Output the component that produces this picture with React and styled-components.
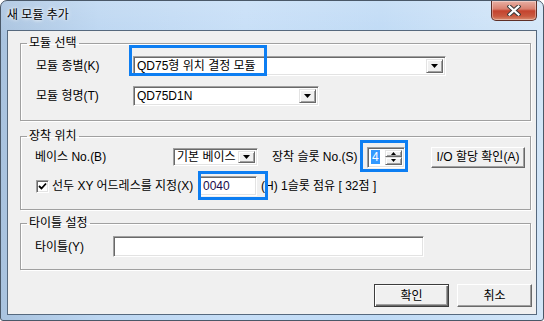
import React from "react";
import styled, { createGlobalStyle, css } from "styled-components";

const FONT = `"Liberation Sans", "Noto Sans CJK KR", sans-serif`;

const GlobalStyle = createGlobalStyle`
  html, body {
    margin: 0;
    padding: 0;
    background: #fff;
  }
  body {
    font-family: ${FONT};
    font-size: 12px;
  }
`;

const sunken = css`
  box-sizing: border-box;
  border: 1px solid;
  border-color: #a0a0a0 #fff #fff #a0a0a0;
  box-shadow: inset 1px 1px 0 #696969, inset -1px -1px 0 #e3e3e3;
  background: #fff;
`;

const raised = css`
  box-sizing: border-box;
  border: 1px solid;
  border-color: #e3e3e3 #696969 #696969 #e3e3e3;
  box-shadow: inset 1px 1px 0 #fff, inset -1px -1px 0 #a0a0a0;
  background: #f0f0f0;
`;

const Window = styled.div`
  position: relative;
  width: 544px;
  height: 321px;
  box-sizing: border-box;
  border: 1px solid #4a5868;
  border-radius: 7px 7px 3px 3px;
  background:
    linear-gradient(180deg, rgba(255, 255, 255, 0.15) 0%, rgba(255, 255, 255, 0) 40px),
    linear-gradient(90deg, #a9c3df 0%, #bcd6f1 18%, #c6def7 45%, #bfdaf5 70%, #d3e6f8 100%);
  display: flex;
  flex-direction: column;
  overflow: hidden;
`;

const TitleBar = styled.div`
  height: 29px;
  display: flex;
  justify-content: space-between;
  align-items: flex-start;
  padding: 0 6px;
`;

const TitleText = styled.div`
  margin-top: 7px;
  font: 12px/14px ${FONT};
  color: #000;
  text-shadow: 0 0 5px #fff, 0 0 3px #fff;
`;

const CloseButton = styled.div`
  box-sizing: border-box;
  width: 46px;
  height: 21px;
  margin-top: -1px;
  border: 1px solid #5e2f27;
  border-top-color: #7a4a42;
  border-radius: 0 0 5px 5px;
  background: linear-gradient(180deg, #e8b0a4 0%, #d9806f 42%, #c4432e 52%, #c95a40 80%, #d98c70 100%);
  box-shadow: inset 0 0 0 1px rgba(255, 255, 255, 0.35);
  display: flex;
  align-items: center;
  justify-content: center;
`;

const Client = styled.div`
  flex: 1;
  margin: 0 6px 5px;
  border: 1px solid #56697e;
  background: #f0f0f0;
  padding: 5px 5px 0 12px;
  display: flex;
  flex-direction: column;
`;

const Group = styled.fieldset`
  margin: ${(p) => p.$mt}px 0 0;
  padding: ${(p) => `${p.$pt}px 0 ${p.$pb}px ${p.$pl}px`};
  border: 1px solid #a0a0a0;
  box-shadow: 1px 1px 0 #fff, inset 1px 1px 0 #fff;
  min-width: 0;
  display: flex;
  flex-direction: column;
  gap: ${(p) => p.$gap || 0}px;

  & > legend {
    margin-left: ${(p) => 6 - p.$pl}px;
  }
`;

const Legend = styled.legend`
  padding: 0 2px;
  font: 12px/14px ${FONT};
  color: #000;
`;

const Row = styled.div`
  display: flex;
  align-items: center;
  height: ${(p) => p.$h}px;
`;

const Label = styled.span`
  flex: none;
  width: ${(p) => (p.$w ? `${p.$w}px` : "auto")};
  margin-left: ${(p) => p.$ml || 0}px;
  font: 12px/14px ${FONT};
  color: #000;
  white-space: nowrap;
`;

const Combo = styled.div`
  ${sunken};
  flex: none;
  width: ${(p) => p.$w}px;
  height: ${(p) => p.$h}px;
  display: flex;
  align-items: center;
  padding: 2px;
`;

const ComboText = styled.span`
  flex: 1;
  padding-left: 1px;
  font: 12px/14px ${FONT};
  color: #000;
  white-space: nowrap;
  overflow: hidden;
`;

const DropButton = styled.span`
  ${raised};
  flex: none;
  width: 17px;
  height: 100%;
  display: flex;
  align-items: center;
  justify-content: center;
`;

const Arrow = ({ up, w = 7 }) => {
  const h = Math.ceil(w / 2);
  return (
    <svg width={w} height={h} viewBox={`0 0 ${w} ${h}`}>
      <polygon points={up ? `0,${h} ${w},${h} ${w / 2},0` : `0,0 ${w},0 ${w / 2},${h}`} fill="#000" />
    </svg>
  );
};

const Spin = styled.div`
  ${sunken};
  flex: none;
  width: 38px;
  height: 21px;
  margin-left: 1px;
  padding: 2px;
  display: flex;
`;

const SpinField = styled.span`
  flex: 1;
  display: flex;
  align-items: center;
  padding-left: 1px;
`;

const Selected = styled.span`
  background: #3399ff;
  color: #fff;
  font: 12px/14px ${FONT};
  padding: 0 1px;
`;

const SpinButtons = styled.span`
  flex: none;
  width: 17px;
  display: flex;
  flex-direction: column;
`;

const SpinButton = styled.span`
  ${raised};
  flex: 1;
  display: flex;
  align-items: center;
  justify-content: center;
`;

const Button = styled.div`
  ${raised};
  flex: none;
  width: ${(p) => p.$w}px;
  height: ${(p) => p.$h}px;
  margin-left: ${(p) => p.$ml || 0}px;
  border-color: #fff #696969 #696969 #fff;
  box-shadow: inset -1px -1px 0 #a0a0a0;
  display: flex;
  align-items: center;
  justify-content: center;
  font: 12px/14px ${FONT};
  color: #000;

  ${(p) =>
    p.$default &&
    css`
      border: 1px solid #3c3c3c;
      box-shadow: inset 1px 1px 0 #fff, inset -1px -1px 0 #696969, inset -2px -2px 0 #a0a0a0;
    `}
`;

const Check = styled.span`
  ${sunken};
  flex: none;
  width: 13px;
  height: 13px;
  margin-left: 1px;
  display: flex;
  align-items: center;
  justify-content: center;
`;

const TextField = styled.div`
  ${sunken};
  flex: none;
  width: ${(p) => p.$w}px;
  height: ${(p) => p.$h}px;
  padding: 0 3px;
  display: flex;
  align-items: center;
  font: 12px/14px ${FONT};
  color: #1a0a4a;
`;

const Buttons = styled.div`
  display: flex;
  justify-content: flex-end;
  gap: 8px;
  margin: 14px -1px 0 0;
`;

const Highlight = styled.div`
  position: absolute;
  left: ${(p) => p.$x - 1}px;
  top: ${(p) => p.$y - 1}px;
  width: ${(p) => p.$w}px;
  height: ${(p) => p.$h}px;
  box-sizing: border-box;
  border: 3px solid #0d7ef2;
  pointer-events: none;
`;

export default function App() {
  return (
    <>
      <GlobalStyle />
      <Window>
        <TitleBar>
          <TitleText>새 모듈 추가</TitleText>
          <CloseButton>
            <svg width="14" height="11" viewBox="0 0 14 11">
              <path d="M2.5 1.5 L11.5 9.5 M11.5 1.5 L2.5 9.5" stroke="#3a3a3a" strokeWidth="4.2" strokeLinecap="square" />
              <path d="M2.5 1.5 L11.5 9.5 M11.5 1.5 L2.5 9.5" stroke="#fff" strokeWidth="2.2" strokeLinecap="square" />
            </svg>
          </CloseButton>
        </TitleBar>

        <Client>
          <Group $mt={0} $pt={6} $pb={14} $pl={15} $gap={10}>
            <Legend>모듈 선택</Legend>
            <Row $h={20}>
              <Label $w={97}>모듈 종별(K)</Label>
              <Combo $w={313} $h={20}>
                <ComboText>QD75형 위치 결정 모듈</ComboText>
                <DropButton>
                  <Arrow />
                </DropButton>
              </Combo>
            </Row>
            <Row $h={20}>
              <Label $w={97}>모듈 형명(T)</Label>
              <Combo $w={186} $h={20}>
                <ComboText>QD75D1N</ComboText>
                <DropButton>
                  <Arrow />
                </DropButton>
              </Combo>
            </Row>
          </Group>

          <Group $mt={8} $pt={2} $pb={13} $pl={14} $gap={7}>
            <Legend>장착 위치</Legend>
            <Row $h={24}>
              <Label $w={138}>베이스 No.(B)</Label>
              <Combo $w={85} $h={18}>
                <ComboText>기본 베이스</ComboText>
                <DropButton>
                  <Arrow />
                </DropButton>
              </Combo>
              <Label $w={94} $ml={14}>장착 슬롯 No.(S)</Label>
              <Spin>
                <SpinField>
                  <Selected>4</Selected>
                </SpinField>
                <SpinButtons>
                  <SpinButton>
                    <Arrow up w={5} />
                  </SpinButton>
                  <SpinButton>
                    <Arrow w={5} />
                  </SpinButton>
                </SpinButtons>
              </Spin>
              <Button $w={94} $h={21} $ml={26}>I/O 할당 확인(A)</Button>
            </Row>
            <Row $h={20}>
              <Check>
                <svg width="9" height="9" viewBox="0 0 9 9">
                  <path d="M1 4 L3.5 6.5 L8 1.5" stroke="#000" strokeWidth="1.8" fill="none" />
                </svg>
              </Check>
              <Label $w={147} $ml={3}>선두 XY 어드레스를 지정(X)</Label>
              <TextField $w={58} $h={20}>0040</TextField>
              <Label $ml={4}>(H) 1슬롯 점유 [ 32점 ]</Label>
            </Row>
          </Group>

          <Group $mt={6} $pt={6} $pb={12} $pl={14}>
            <Legend>타이틀 설정</Legend>
            <Row $h={21}>
              <Label $w={78}>타이틀(Y)</Label>
              <TextField $w={311} $h={21} />
            </Row>
          </Group>

          <Buttons>
            <Button $w={75} $h={23} $default>확인</Button>
            <Button $w={75} $h={23}>취소</Button>
          </Buttons>
        </Client>

        <Highlight $x={129} $y={45} $w={138} $h={31} />
        <Highlight $x={198} $y={171} $w={70} $h={29} />
        <Highlight $x={360} $y={140} $w={48} $h={32} />
      </Window>
    </>
  );
}
